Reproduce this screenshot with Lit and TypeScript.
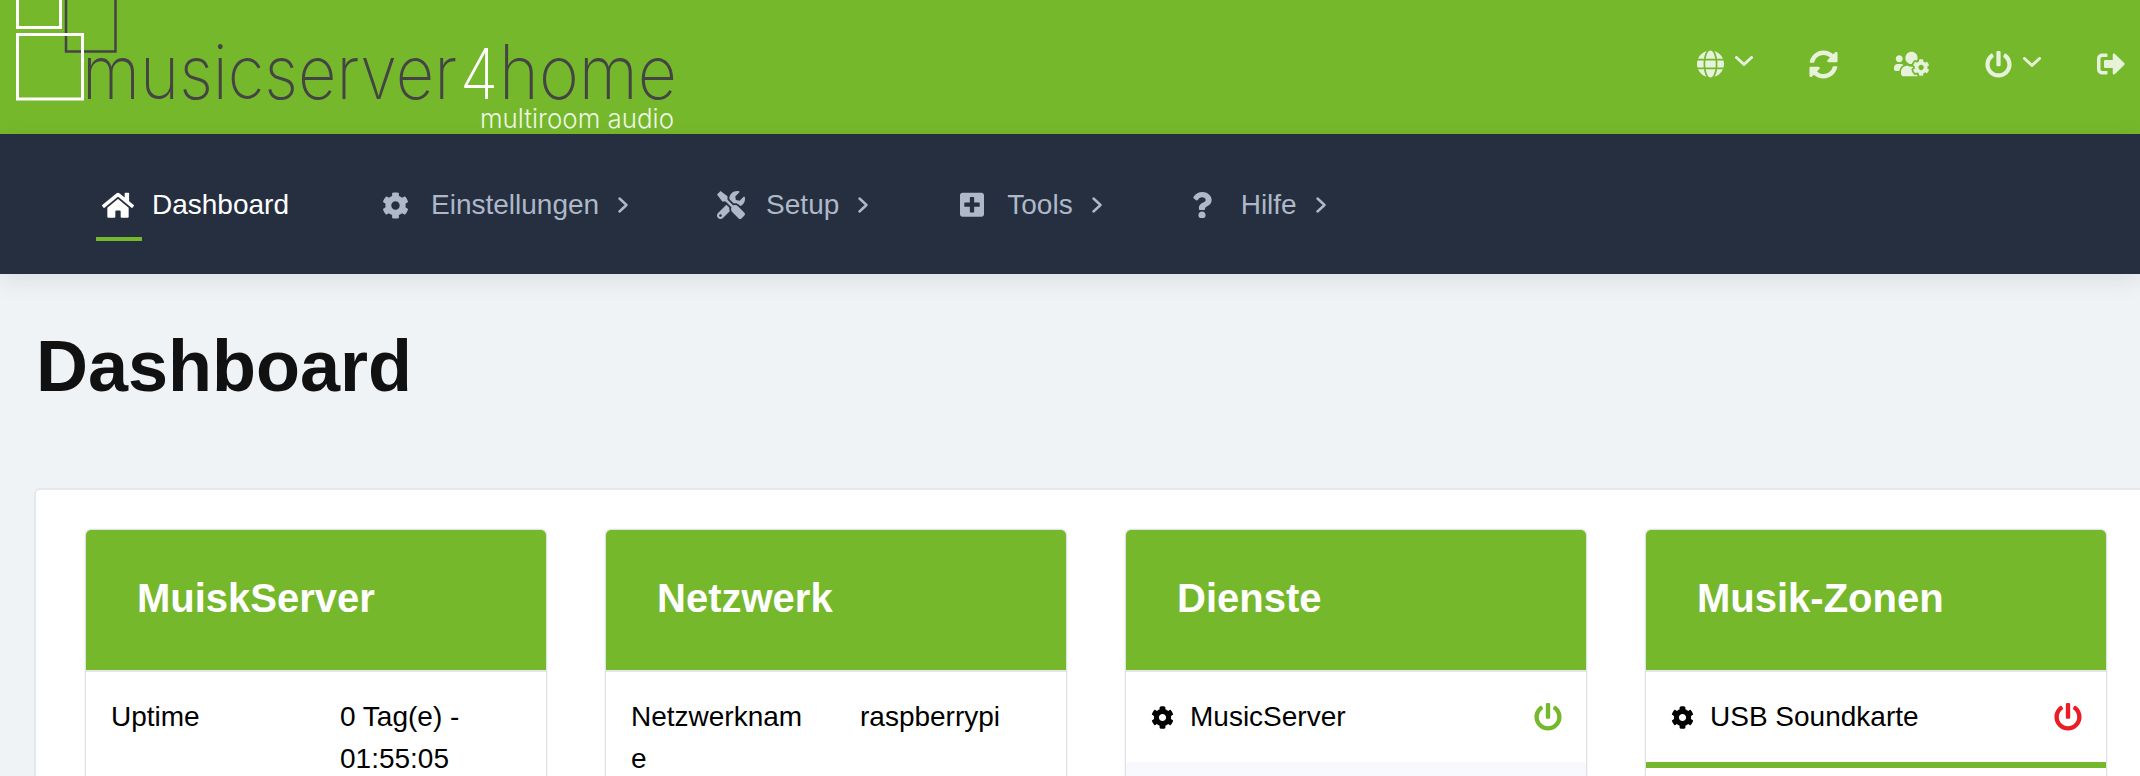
import { LitElement, html, css } from "lit";
import { customElement } from "lit/decorators.js";

type Ic = [string, number, number];
const P: Record<string, Ic> = {
  home: ["M280.37 148.26L96 300.11V464a16 16 0 0 0 16 16l112.06-.29a16 16 0 0 0 15.92-16V368a16 16 0 0 1 16-16h64a16 16 0 0 1 16 16v95.64a16 16 0 0 0 16 16.05L464 480a16 16 0 0 0 16-16V300L295.67 148.26a12.19 12.19 0 0 0-15.3 0zM571.6 251.47L488 182.56V44.05a12 12 0 0 0-12-12h-56a12 12 0 0 0-12 12v72.61L318.47 43a48 48 0 0 0-61 0L4.34 251.47a12 12 0 0 0-1.6 16.9l25.5 31A12 12 0 0 0 45.15 301l235.22-193.74a12.19 12.19 0 0 1 15.3 0L530.9 301a12 12 0 0 0 16.9-1.6l25.5-31a12 12 0 0 0-1.7-16.93z", 576, 512],
  cog: ["M487.4 315.7l-42.6-24.6c4.3-23.2 4.3-47 0-70.2l42.6-24.6c4.9-2.8 7.1-8.6 5.5-14-11.1-35.6-30-67.8-54.7-94.6-3.8-4.1-10-5.1-14.8-2.3L380.8 110c-17.9-15.4-38.5-27.3-60.8-35.1V25.8c0-5.6-3.9-10.5-9.4-11.7-36.7-8.2-74.3-7.8-109.2 0-5.5 1.2-9.4 6.1-9.4 11.7V75c-22.2 7.9-42.8 19.8-60.8 35.1L88.7 85.5c-4.9-2.8-11-1.9-14.8 2.3-24.7 26.7-43.6 58.9-54.7 94.6-1.7 5.4.6 11.2 5.5 14L67.3 221c-4.3 23.2-4.3 47 0 70.2l-42.6 24.6c-4.9 2.8-7.1 8.6-5.5 14 11.1 35.6 30 67.8 54.7 94.6 3.8 4.1 10 5.1 14.8 2.3l42.6-24.6c17.9 15.4 38.5 27.3 60.8 35.1v49.2c0 5.6 3.9 10.5 9.4 11.7 36.7 8.2 74.3 7.8 109.2 0 5.5-1.2 9.4-6.1 9.4-11.7v-49.2c22.2-7.9 42.8-19.8 60.8-35.1l42.6 24.6c4.9 2.8 11 1.9 14.8-2.3 24.7-26.7 43.6-58.9 54.7-94.6 1.5-5.5-.7-11.3-5.6-14.1zM256 336c-44.1 0-80-35.9-80-80s35.9-80 80-80 80 35.9 80 80-35.9 80-80 80z", 512, 512],
  tools: ["M501.1 395.7L384 278.6c-23.1-23.1-57.6-27.6-85.4-13.9L192 158.1V96L64 0 0 64l96 128h62.1l106.6 106.6c-13.6 27.8-9.2 62.3 13.9 85.4l117.1 117.1c14.6 14.6 38.2 14.6 52.7 0l52.7-52.7c14.5-14.6 14.5-38.2 0-52.7zM331.7 225c28.3 0 54.9 11 74.9 31l19.4 19.4c15.8-6.9 30.8-16.5 43.8-29.5 37.1-37.1 49.7-89.3 37.9-136.7-2.2-9-13.5-12.1-20.1-5.5l-74.4 74.4-67.9-11.3L334 98.9l74.4-74.4c6.6-6.6 3.4-17.9-5.7-20.2-47.4-11.7-99.6.9-136.6 37.9-28.5 28.5-41.9 66.1-41.2 103.6l82.1 82.1c8.1-1.9 16.5-2.9 24.7-2.9zm-103.9 82l-56.7-56.7L18.7 402.8c-25 25-25 65.5 0 90.5s65.5 25 90.5 0l123.6-123.6c-7.6-19.9-9.9-41.6-5-62.7zM64 472c-13.2 0-24-10.8-24-24 0-13.3 10.7-24 24-24s24 10.7 24 24c0 13.2-10.7 24-24 24z", 512, 512],
  plus: ["M400 32H48C21.5 32 0 53.5 0 80v352c0 26.5 21.5 48 48 48h352c26.5 0 48-21.5 48-48V80c0-26.5-21.5-48-48-48zm-32 252c0 6.6-5.4 12-12 12h-92v92c0 6.6-5.4 12-12 12h-56c-6.6 0-12-5.4-12-12v-92H92c-6.6 0-12-5.4-12-12v-56c0-6.6 5.4-12 12-12h92v-92c0-6.6 5.4-12 12-12h56c6.6 0 12 5.4 12 12v92h92c6.6 0 12 5.4 12 12v56z", 448, 512],
  question: ["M202.021 0C122.202 0 70.503 32.703 29.914 91.026c-7.363 10.58-5.093 25.086 5.178 32.874l43.138 32.709c10.373 7.865 25.132 6.026 33.253-4.148 25.049-31.381 43.63-49.449 82.757-49.449 30.764 0 68.816 19.799 68.816 49.631 0 22.552-18.617 34.134-48.993 51.164-35.423 19.86-82.299 44.576-82.299 106.405V320c0 13.255 10.745 24 24 24h72.471c13.255 0 24-10.745 24-24v-5.773c0-42.86 125.268-44.645 125.268-160.627C377.504 66.256 286.902 0 202.021 0zM192 373.459c-38.196 0-69.271 31.075-69.271 69.271 0 38.195 31.075 69.27 69.271 69.27s69.271-31.075 69.271-69.271-31.075-69.27-69.271-69.27z", 384, 512],
  globe: ["M336.5 160C322 70.7 287.8 8 248 8s-74 62.7-88.5 152h177zM152 256c0 22.2 1.2 43.5 3.3 64h185.3c2.1-20.5 3.3-41.8 3.3-64s-1.2-43.5-3.3-64H155.3c-2.1 20.5-3.3 41.8-3.3 64zm324.7-96c-28.6-67.9-86.5-120.4-158-141.6 24.4 33.8 41.2 84.7 50 141.6h108zM177.2 18.4C105.8 39.6 47.8 92.1 19.3 160h108c8.7-56.9 25.5-107.8 49.9-141.6zM487.4 192H372.7c2.1 21 3.3 42.5 3.3 64s-1.2 43-3.3 64h114.6c5.5-20.5 8.6-41.8 8.6-64s-3.1-43.5-8.5-64zM120 256c0-21.5 1.2-43 3.3-64H8.6C3.2 212.5 0 233.8 0 256s3.2 43.5 8.6 64h114.6c-2-21-3.2-42.5-3.2-64zm39.5 96c14.5 89.3 48.7 152 88.5 152s74-62.7 88.5-152h-177zm159.3 141.6c71.4-21.2 129.4-73.7 158-141.6h-108c-8.8 56.9-25.6 107.8-50 141.6zM19.3 352c28.6 67.9 86.5 120.4 158 141.6-24.4-33.8-41.2-84.7-50-141.6h-108z", 496, 512],
  sync: ["M370.72 133.28C339.458 104.008 298.888 87.962 255.848 88c-77.458.068-144.328 53.178-162.791 126.85-1.344 5.363-6.122 9.15-11.651 9.15H24.103c-7.498 0-13.194-6.807-11.807-14.176C33.933 94.924 134.813 8 256 8c66.448 0 126.791 26.136 171.315 68.685L463.03 40.97C478.149 25.851 504 36.559 504 57.941V192c0 13.255-10.745 24-24 24H345.941c-21.382 0-32.09-25.851-16.971-40.971l41.75-41.749zM32 296h134.059c21.382 0 32.09 25.851 16.971 40.971l-41.75 41.75c31.262 29.273 71.835 45.319 114.876 45.28 77.418-.07 144.315-53.144 162.787-126.849 1.344-5.363 6.122-9.15 11.651-9.15h57.304c7.498 0 13.194 6.807 11.807 14.176C478.067 417.076 377.187 504 256 504c-66.448 0-126.791-26.136-171.315-68.685L48.97 471.03C33.851 486.149 8 475.441 8 454.059V320c0-13.255 10.745-24 24-24z", 512, 512],
  users: ["M610.5 341.3c2.6-14.1 2.6-28.5 0-42.6l25.8-14.9c3-1.7 4.3-5.2 3.3-8.5-6.7-21.6-18.2-41.2-33.2-57.4-2.3-2.5-6-3.1-9-1.4l-25.8 14.9c-10.9-9.3-23.4-16.5-36.9-21.3v-29.8c0-3.4-2.4-6.4-5.7-7.1-22.3-5-45-4.8-66.2 0-3.3.7-5.7 3.7-5.7 7.1v29.8c-13.5 4.8-26 12-36.9 21.3l-25.8-14.9c-2.9-1.7-6.7-1.1-9 1.4-15 16.2-26.5 35.8-33.2 57.4-1 3.3.4 6.8 3.3 8.5l25.8 14.9c-2.6 14.1-2.6 28.5 0 42.6l-25.8 14.9c-3 1.7-4.3 5.2-3.3 8.5 6.7 21.6 18.2 41.1 33.2 57.4 2.3 2.5 6 3.1 9 1.4l25.8-14.9c10.9 9.3 23.4 16.5 36.9 21.3v29.8c0 3.4 2.4 6.4 5.7 7.1 22.3 5 45 4.8 66.2 0 3.3-.7 5.7-3.7 5.7-7.1v-29.8c13.5-4.8 26-12 36.9-21.3l25.8 14.9c2.9 1.7 6.7 1.1 9-1.4 15-16.2 26.5-35.8 33.2-57.4 1-3.3-.4-6.8-3.3-8.5l-25.8-14.9zM496 368.5c-26.8 0-48.5-21.8-48.5-48.5s21.8-48.5 48.5-48.5 48.5 21.8 48.5 48.5-21.7 48.5-48.5 48.5zM96 224c35.3 0 64-28.7 64-64s-28.7-64-64-64-64 28.7-64 64 28.7 64 64 64zm224 32c1.9 0 3.7-.5 5.6-.6 8.3-21.7 20.5-42.1 36.3-59.2 7.4-8 17.9-12.6 28.9-12.6 6.9 0 13.7 1.8 19.6 5.3l7.9 4.6c.8-.5 1.6-.9 2.4-1.4 7-14.6 11.2-30.8 11.2-48 0-61.9-50.1-112-112-112S208 82.1 208 144c0 61.9 50.1 112 112 112zm105.2 194.5c-2.3-1.2-4.6-2.6-6.8-3.9-8.2 4.8-15.3 9.8-27.5 9.8-10.9 0-21.4-4.6-28.9-12.6-18.3-19.8-32.3-43.9-40.2-69.6-10.7-34.5 24.9-49.7 25.8-50.3-.1-2.6-.1-5.2 0-7.8l-7.9-4.6c-3.8-2.2-7-5-9.8-8.1-3.3.2-6.5.6-9.8.6-24.6 0-47.6-6-68.5-16h-8.3C179.6 288 128 339.6 128 403.2V432c0 26.5 21.5 48 48 48h255.4c-3.7-6-6.2-12.8-6.2-20.3v-9.2zM173.1 274.6C161.5 263.1 145.6 256 128 256H64c-35.3 0-64 28.7-64 64v32c0 17.7 14.3 32 32 32h65.9c6.3-47.4 34.9-87.3 75.2-109.4z", 640, 512],
  signout: ["M497 273L329 441c-15 15-41 4.5-41-17v-96H152c-13.3 0-24-10.7-24-24v-96c0-13.3 10.7-24 24-24h136V88c0-21.4 25.9-32 41-17l168 168c9.3 9.4 9.3 24.6 0 34zM192 436v-40c0-6.6-5.4-12-12-12H96c-17.7 0-32-14.3-32-32V160c0-17.7 14.3-32 32-32h84c6.6 0 12-5.4 12-12V76c0-6.6-5.4-12-12-12H96c-53 0-96 43-96 96v192c0 53 43 96 96 96h84c6.6 0 12-5.4 12-12z", 512, 512],
  power: ["M400 54.1c63 45 104 118.6 104 201.9 0 136.8-110.8 247.7-247.5 248C120 504.3 8.2 393 8 256.4 7.9 173.1 48.9 99.3 111.8 54.2c11.7-8.3 28-4.8 35 7.7L162.6 90c5.9 10.5 3.1 23.8-6.6 31-41.5 30.8-68 79.6-68 134.9-.1 92.3 74.5 168.1 168 168.1 91.6 0 168.6-74.2 168-169.1-.3-51.8-24.7-101.8-68.1-134-9.7-7.2-12.4-20.5-6.5-30.9l15.8-28.1c7-12.4 23.2-16.1 34.8-7.8zM296 264V24c0-13.3-10.7-24-24-24h-32c-13.3 0-24 10.7-24 24v240c0 13.3 10.7 24 24 24h32c13.3 0 24-10.7 24-24z", 512, 512],
};

const icon = (n: string, w: number) => {
  const [d, vw, vh] = P[n];
  return html`<svg class="ic" width=${w} height=${(w * vh) / vw} viewBox="0 0 ${vw} ${vh}" fill="currentColor"><path d=${d}></path></svg>`;
};
const down = html`<svg class="chev-d" width="18" height="10" viewBox="0 0 18 10" fill="none" stroke="currentColor" stroke-width="3" stroke-linecap="round" stroke-linejoin="round"><polyline points="1.5,1.5 9,8.5 16.5,1.5"></polyline></svg>`;
const right = html`<svg class="chev-r" width="10" height="16" viewBox="0 0 10 16" fill="none" stroke="currentColor" stroke-width="2.4" stroke-linecap="round" stroke-linejoin="round"><polyline points="1.5,1.5 8.5,8 1.5,14.5"></polyline></svg>`;

const NAV = [
  { i: "home", w: 32, t: "Dashboard", active: true, chev: false },
  { i: "cog", w: 27, t: "Einstellungen", active: false, chev: true },
  { i: "tools", w: 28, t: "Setup", active: false, chev: true },
  { i: "plus", w: 24, t: "Tools", active: false, chev: true },
  { i: "question", w: 20, t: "Hilfe", active: false, chev: true },
];

@customElement("app-root")
export class AppRoot extends LitElement {
  static styles = css`
    :host {
      display: block;
      width: 2140px;
      height: 776px;
      overflow: hidden;
      background: #eff3f6;
      font-family: "Liberation Sans", Arial, sans-serif;
      color: #000;
    }
    .ic { display: block; flex: none; }
    .header {
      height: 134px;
      background: #76b82c;
      display: flex;
      justify-content: space-between;
      align-items: center;
    }
    .logo { display: block; width: 700px; height: 134px; flex: none; }
    .logo text { font-family: Inter, "Liberation Sans", sans-serif; font-weight: 200; }
    .logo text.sub { font-weight: 300; }
    .tools {
      display: flex;
      align-items: center;
      gap: 56px;
      padding: 0 15px 6px 0;
      color: #e6f2da;
    }
    .tool { display: flex; align-items: center; gap: 11px; }
    .chev-d { margin-top: -5px; }
    .nav {
      height: 140px;
      background: #252f3f;
      display: flex;
      align-items: center;
      padding: 2px 0 0 98px;
      box-sizing: border-box;
      font-size: 28px;
      color: #aeb8c8;
      position: relative;
      box-shadow: 0 6px 22px rgba(37, 47, 63, 0.1);
    }
    .item {
      display: flex;
      align-items: center;
      margin-right: 83px;
      position: relative;
    }
    .item:nth-child(n + 3) { margin-right: 84px; }
    .item.active { color: #fff; margin-right: 87px; }
    .item.active::after {
      content: "";
      position: absolute;
      left: -2px;
      bottom: -20px;
      width: 46px;
      height: 4px;
      background: #76b82c;
    }
    .nav-ic { width: 40px; display: flex; justify-content: center; margin-right: 15px; }
    .item.active .nav-ic { margin-right: 14px; }
    .item:last-child .nav-ic { width: 32px; margin-right: 23px; }
    .chev-r { margin-left: 19px; }
    .main { padding: 49px 0 0 36px; }
    h1 {
      margin: 0;
      font-size: 72px;
      font-weight: 700;
      line-height: 86px;
      color: #111;
    }
    .card {
      margin: 79px 0 0 -2px;
      width: 2300px;
      background: #fff;
      border: 2px solid #e5e8ea;
      border-radius: 6px;
      padding: 39px 0 0 49px;
      box-sizing: border-box;
      display: grid;
      grid-template-columns: repeat(4, 462px);
      column-gap: 58px;
      height: 400px;
    }
    .panel {
      border: 1px solid #dfe2e4;
      border-radius: 6px;
      box-shadow: 0 0 2px rgba(0, 0, 0, 0.12);
      overflow: hidden;
      height: 600px;
      box-sizing: border-box;
    }
    .panel h2 {
      margin: 0;
      background: #76b82c;
      color: #fff;
      font-size: 40px;
      font-weight: 700;
      height: 136px;
      padding: 0 0 4px 51px;
      display: flex;
      align-items: center;
      border-bottom: 2px solid #e4e6e8;
    }
    .kv {
      display: grid;
      grid-template-columns: 229px 229px;
      margin-left: 1px;
      font-size: 28px;
      line-height: 42px;
    }
    .kv > div { padding: 24px; overflow-wrap: anywhere; min-width: 0; }
    .svc {
      display: flex;
      align-items: center;
      font-size: 28px;
      line-height: 42px;
      padding: 24px 24px 24px 25px;
      height: 42px;
    }
    .svc .lead { margin-right: 16px; }
    .svc span { flex: 1; }
    .green { color: #76b82c; }
    .red { color: #ec1c24; }
    .stripe { background: #f8f9fe; height: 90px; }
    .bar { background: #76b82c; height: 6px; }
  `;

  render() {
    return html`
      <div class="header">
        <svg class="logo" viewBox="0 0 700 134">
          <rect x="17.5" y="-3" width="43" height="30.5" fill="none" stroke="#fff" stroke-width="3"></rect>
          <rect x="66" y="-3" width="49.5" height="54.5" fill="none" stroke="#444" stroke-width="2.5"></rect>
          <rect x="17.5" y="34.5" width="65" height="64.5" fill="none" stroke="#fff" stroke-width="3"></rect>
          <text x="82" y="99" font-size="75" fill="#444" textLength="375" lengthAdjust="spacingAndGlyphs">musicserver</text>
          <text x="460" y="99" font-size="70" fill="#fff" textLength="38" lengthAdjust="spacingAndGlyphs">4</text>
          <text x="499" y="99" font-size="75" fill="#444" textLength="178" lengthAdjust="spacingAndGlyphs">home</text>
          <text class="sub" x="480" y="128" font-size="27" fill="#eef6e4" textLength="194" lengthAdjust="spacingAndGlyphs">multiroom audio</text>
        </svg>
        <div class="tools">
          <div class="tool">${icon("globe", 27)}${down}</div>
          <div class="tool">${icon("sync", 29)}</div>
          <div class="tool">${icon("users", 35)}</div>
          <div class="tool">${icon("power", 27)}${down}</div>
          <div class="tool">${icon("signout", 28)}</div>
        </div>
      </div>
      <div class="nav">
        ${NAV.map(
          (n) => html`<div class="item ${n.active ? "active" : ""}">
            <div class="nav-ic">${icon(n.i, n.w)}</div>
            <span>${n.t}</span>
            ${n.chev ? right : ""}
          </div>`
        )}
      </div>
      <div class="main">
        <h1>Dashboard</h1>
        <div class="card">
          <div class="panel">
            <h2>MuiskServer</h2>
            <div class="kv"><div>Uptime</div><div>0 Tag(e) - 01:55:05</div></div>
          </div>
          <div class="panel">
            <h2>Netzwerk</h2>
            <div class="kv"><div>Netzwerkname</div><div>raspberrypi</div></div>
          </div>
          <div class="panel">
            <h2>Dienste</h2>
            <div class="svc"><div class="lead">${icon("cog", 23)}</div><span>MusicServer</span><div class="green">${icon("power", 28)}</div></div>
            <div class="stripe"></div>
          </div>
          <div class="panel">
            <h2>Musik-Zonen</h2>
            <div class="svc"><div class="lead">${icon("cog", 23)}</div><span>USB Soundkarte</span><div class="red">${icon("power", 28)}</div></div>
            <div class="bar"></div>
          </div>
        </div>
      </div>
    `;
  }
}
